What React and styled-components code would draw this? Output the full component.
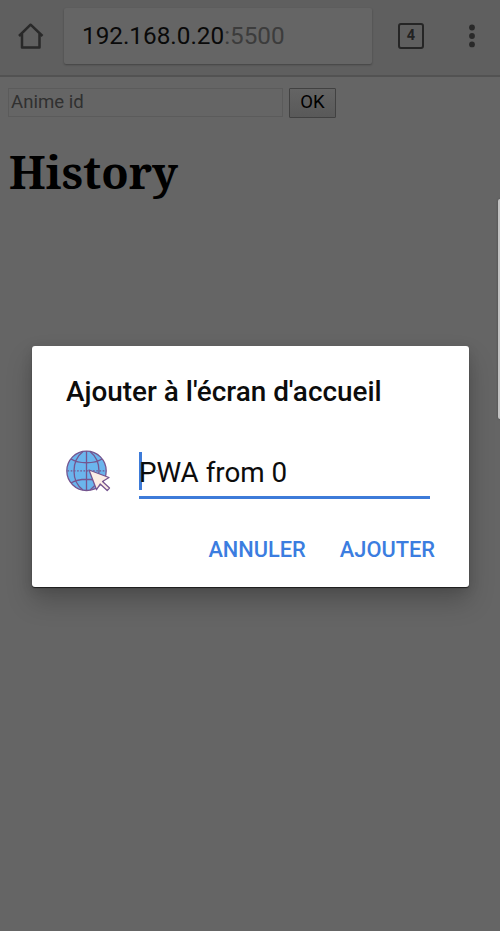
import React from 'react';
import styled, { createGlobalStyle } from 'styled-components';

const GlobalStyle = createGlobalStyle`
  * { box-sizing: border-box; }
  body { margin: 0; background: #656565; }
`;

const Screen = styled.div`
  position: relative;
  height: 931px;
  overflow: hidden;
  background: #656565;
  font-family: Roboto, sans-serif;
`;

const Toolbar = styled.header`
  display: flex;
  height: 77px;
  padding: 8px 0 0 18px;
  background: #5f5f5f;
  border-bottom: 2px solid #525252;
`;

const HomeIcon = styled.svg`
  width: 26px;
  height: 28px;
  margin-top: 14px;
`;

const AddressBar = styled.div`
  width: 308px;
  height: 56px;
  margin-left: 20px;
  padding-left: 18px;
  border-radius: 2px;
  background: #656565;
  box-shadow: 0 1px 2px rgba(0, 0, 0, 0.3);
  color: #0a0a0a;
  font-size: 24.3px;
  line-height: 55px;
  white-space: nowrap;
`;

const Port = styled.span`
  color: #3c3c3c;
`;

const TabCount = styled.div`
  width: 26px;
  height: 26px;
  margin: 15px 0 0 26px;
  border: 2px solid #252525;
  border-radius: 3px;
  color: #222;
  font: 700 14.5px/22px Roboto, sans-serif;
  text-align: center;
`;

const MenuDots = styled.svg`
  width: 8px;
  height: 24px;
  margin: 16px 0 0 44px;
`;

const SearchRow = styled.form`
  display: flex;
  gap: 6px;
  padding: 11px 8px 0;
`;

const AnimeField = styled.div`
  width: 275px;
  height: 29px;
  padding-left: 2px;
  border: 1px solid #5b5b5b;
  color: #303030;
  font-size: 18.6px;
  line-height: 27px;
`;

const OkButton = styled.button`
  width: 47px;
  height: 30px;
  padding: 0 0 3px;
  border: 1px solid #414141;
  border-radius: 1px;
  background: linear-gradient(#646464, #595959);
  color: #000;
  font: 18.5px/24px Roboto, sans-serif;
`;

const Heading = styled.h1`
  margin: 23px 0 0 9px;
  color: #000;
  font: 700 44.8px/62px "Noto Serif", "Droid Serif", "Liberation Serif", serif;
`;

const EdgeHandle = styled.div`
  position: absolute;
  top: 199px;
  right: 0;
  width: 2px;
  height: 220px;
  border-radius: 3px 0 0 3px;
  background: #c4c4c4;
  box-shadow: 0 0 2px #444;
`;

const Dialog = styled.section`
  position: absolute;
  top: 346px;
  left: 32px;
  display: flex;
  flex-direction: column;
  width: 437px;
  height: 241px;
  padding: 28px 34px 0;
  border-radius: 3px;
  background: #fff;
  box-shadow: 0 1px 1px rgba(0, 0, 0, 0.65), 0 14px 26px rgba(0, 0, 0, 0.22), 0 3px 12px rgba(0, 0, 0, 0.1);
`;

const DialogTitle = styled.h2`
  margin: 0;
  color: #0c0c0c;
  font-size: 27.9px;
  font-weight: 500;
  line-height: 36px;
  white-space: nowrap;
`;

const ShortcutRow = styled.div`
  display: flex;
  align-items: flex-start;
  margin-top: 39px;
`;

const GlobeIcon = styled.svg`
  width: 46px;
  height: 46px;
`;

const NameField = styled.div`
  width: 291px;
  height: 50px;
  margin-left: 27px;
  border-bottom: 3px solid #3d7bd9;
`;

const NameText = styled.div`
  width: max-content;
  height: 38px;
  margin-top: 3px;
  border-left: 3px solid #3d7bd9;
  color: #0c0c0c;
  font-size: 27.8px;
  line-height: 42px;
  white-space: nowrap;
`;

const NameGlyphs = styled.span`
  margin-left: -3px;
`;

const Actions = styled.div`
  display: flex;
  justify-content: flex-end;
  gap: 34px;
  margin-top: 36px;
`;

const Action = styled.button`
  padding: 0;
  border: 0;
  background: none;
  color: #3b7de0;
  font: 500 21.8px/30px Roboto, sans-serif;
`;

export default function App() {
  return (
    <Screen>
      <GlobalStyle />
      <Toolbar>
        <HomeIcon viewBox="0 0 26 28" fill="none" stroke="#292929" strokeWidth="2.5" strokeLinejoin="round">
          <path d="M1 14L12.6 2.7L24.5 14M4 12V25.6H21.5V12" />
        </HomeIcon>
        <AddressBar>192.168.0.20<Port>:5500</Port></AddressBar>
        <TabCount>4</TabCount>
        <MenuDots viewBox="0 0 8 24" fill="#292929">
          <circle cx="4" cy="3.5" r="2.9" />
          <circle cx="4" cy="12" r="2.9" />
          <circle cx="4" cy="20.4" r="2.9" />
        </MenuDots>
      </Toolbar>
      <SearchRow>
        <AnimeField>Anime id</AnimeField>
        <OkButton type="button">OK</OkButton>
      </SearchRow>
      <Heading>History</Heading>
      <EdgeHandle />
      <Dialog>
        <DialogTitle>Ajouter à l'écran d'accueil</DialogTitle>
        <ShortcutRow>
          <GlobeIcon viewBox="0 0 46 46" fill="none" stroke="#75558f" strokeWidth="1.3">
            <circle cx="20.5" cy="21.8" r="19.7" fill="#6bb5ed" />
            <path d="M20.5 2V41.5M17 2.5C5 12 5 32 17 41M24 2.5C36 12 36 32 24 41M5 10C13 15 28 15 36 10M5 34C13 29 28 29 36 34" />
            <path d="M1.5 21.8H40" strokeDasharray="1.6 1.6" />
            <path d="M23 21L43 28.5L36.5 32.5L43.5 39L41.2 41.5L34.2 35L30.5 40.7Z" fill="#fdeee5" strokeLinejoin="round" />
          </GlobeIcon>
          <NameField><NameText><NameGlyphs>PWA from 0</NameGlyphs></NameText></NameField>
        </ShortcutRow>
        <Actions>
          <Action type="button">ANNULER</Action>
          <Action type="button">AJOUTER</Action>
        </Actions>
      </Dialog>
    </Screen>
  );
}
